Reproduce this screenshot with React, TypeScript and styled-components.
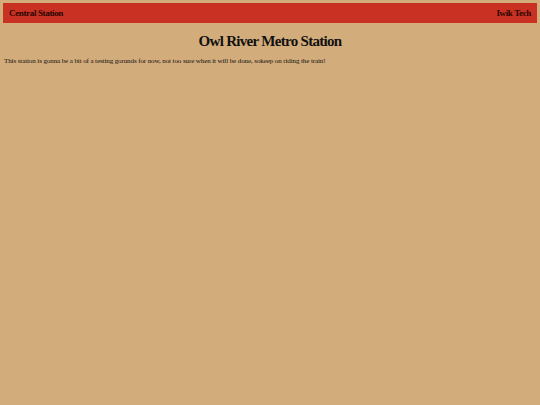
import React from "react";
import styled, { createGlobalStyle } from "styled-components";

const GlobalStyle = createGlobalStyle`
  html, body {
    margin: 0;
    background: #d3ac7b;
  }
  body {
    padding: 3px;
    font-family: "Liberation Serif", "Times New Roman", serif;
    color: #111;
  }
`;

const TopBar = styled.header`
  display: flex;
  align-items: center;
  justify-content: space-between;
  height: 20px;
  padding: 0 6px;
  background: #c93223;
  box-sizing: border-box;
`;

const BarLabel = styled.span`
  font-size: 9px;
  font-weight: bold;
  letter-spacing: -0.35px;
  color: #2a0400;
`;

const Title = styled.h1`
  margin: 9px 0 0;
  text-align: center;
  font-size: 15px;
  font-weight: bold;
  letter-spacing: -0.7px;
  line-height: 18px;
`;

const Intro = styled.p`
  margin: 7px 0 0 1px;
  font-size: 7px;
  letter-spacing: -0.1px;
  line-height: 9px;
`;

export default function App() {
  return (
    <>
      <GlobalStyle />
      <TopBar>
        <BarLabel>Central Station</BarLabel>
        <BarLabel>Iwik Tech</BarLabel>
      </TopBar>
      <Title>Owl River Metro Station</Title>
      <Intro>
        This station is gonna be a bit of a testing gorunds for now, not too sure when it will be done, sokeep on riding the train!
      </Intro>
    </>
  );
}
